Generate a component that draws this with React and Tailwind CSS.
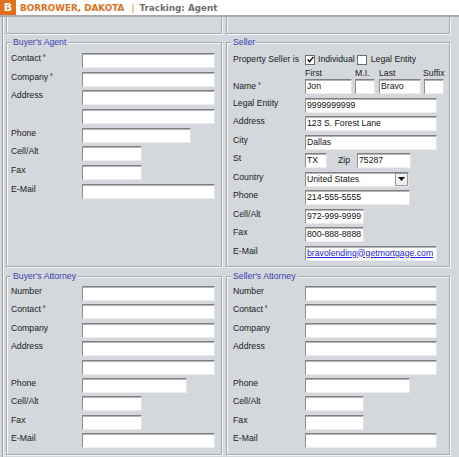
import React from "react";

const LBL = "text-[8.7px] leading-[11px] text-[#1b1b1b] whitespace-nowrap";

function Mark() {
  return <span className="ml-[2px] relative -top-[2px] text-[6px]">ª</span>;
}

function Field({ w, children, className = "" }) {
  return (
    <div
      className={`h-[15px] shrink-0 bg-white border border-t-[#808080] border-l-[#8e8e8e] border-r-[#e4e4e4] border-b-[#ececec] shadow-[inset_0_1px_0_#b4b4b4] pl-[1px] text-[8.7px] leading-[13px] text-[#111] whitespace-nowrap overflow-hidden ${w} ${className}`}
    >
      {children}
    </div>
  );
}

function Row({ label, mark, lw, w, children }) {
  return (
    <div className="flex h-[15px]">
      <div className={`${lw} shrink-0 ${LBL}`}>
        {label}
        {mark && <Mark />}
      </div>
      <Field w={w}>{children}</Field>
    </div>
  );
}

function Check({ on }) {
  return (
    <span className="w-[10px] h-[10px] shrink-0 bg-white border border-[#6e6e6e] flex items-center justify-center">
      {on && (
        <svg width="7" height="7" viewBox="0 0 7 7">
          <path d="M0.6 3.4L2.6 5.6L6.4 0.9" stroke="#111" strokeWidth="1.5" fill="none" />
        </svg>
      )}
    </span>
  );
}

function Group({ title, className, children }) {
  return (
    <fieldset
      className={`min-w-0 border border-[#a7abaf] shadow-[inset_1px_1px_0_#f5f7f9,1px_1px_0_#f5f7f9] ${className}`}
    >
      <legend className="ml-[4px] px-[2px] bg-[#d4d7db] text-[8.7px] leading-[11px] text-[#3b3fb4]">{title}</legend>
      {children}
    </fieldset>
  );
}

const TOPBOX =
  "h-[17px] border-x border-b border-[#a7abaf] shadow-[inset_1px_0_0_#f5f7f9,1px_1px_0_#f5f7f9]";

function BuyersAgent() {
  return (
    <Group title="Buyer's Agent" className="mt-[2.5px] h-[230.5px]">
      <div className="pl-[4px] pt-[5.5px] flex flex-col gap-[3.7px]">
        <Row label="Contact" mark lw="w-[71px]" w="w-[133px]" />
        <Row label="Company" mark lw="w-[71px]" w="w-[133px]" />
        <Row label="Address" lw="w-[71px]" w="w-[133px]" />
        <Row label="" lw="w-[71px]" w="w-[133px]" />
        <Row label="Phone" lw="w-[71px]" w="w-[109px]" />
        <Row label="Cell/Alt" lw="w-[71px]" w="w-[60px]" />
        <Row label="Fax" lw="w-[71px]" w="w-[60px]" />
        <Row label="E-Mail" lw="w-[71px]" w="w-[133px]" />
      </div>
    </Group>
  );
}

function Attorney({ title, lw, full, phone, cell, pl }) {
  return (
    <Group title={title} className="mt-[3.5px] h-[184.5px]">
      <div className={`${pl} pt-[4.5px] flex flex-col gap-[3.4px]`}>
        <Row label="Number" lw={lw} w={full} />
        <Row label="Contact" mark lw={lw} w={full} />
        <Row label="Company" lw={lw} w={full} />
        <Row label="Address" lw={lw} w={full} />
        <Row label="" lw={lw} w={full} />
        <Row label="Phone" lw={lw} w={phone} />
        <Row label="Cell/Alt" lw={lw} w={cell} />
        <Row label="Fax" lw={lw} w={cell} />
        <Row label="E-Mail" lw={lw} w={full} />
      </div>
    </Group>
  );
}

function Seller() {
  return (
    <Group title="Seller" className="mt-[2.5px] h-[230.5px]">
      <div className="pl-[6px] pt-[5.5px] flex flex-col">
        <div className={`flex h-[13px] items-center ${LBL}`}>
          <span className="w-[72px]">Property Seller is</span>
          <Check on />
          <span className="ml-[3px]">Individual</span>
          <span className="ml-[2px]">
            <Check />
          </span>
          <span className="ml-[4px]">Legal Entity</span>
        </div>
        <div className={`flex h-[13px] pl-[72px] pt-[2px] ${LBL} leading-[10px]`}>
          <span className="w-[50px]">First</span>
          <span className="w-[24px]">M.I.</span>
          <span className="w-[44px]">Last</span>
          <span>Suffix</span>
        </div>
        <div className="flex flex-col gap-[3.5px]">
          <div className="flex h-[15px] items-center">
            <div className={`w-[72px] ${LBL}`}>
              Name
              <Mark />
            </div>
            <Field w="w-[47px]">Jon</Field>
            <Field w="w-[20px]" className="ml-[3px]" />
            <Field w="w-[42px]" className="ml-[4px]">Bravo</Field>
            <Field w="w-[20px]" className="ml-[3px]" />
          </div>
          <Row label="Legal Entity" lw="w-[72px]" w="w-[132px]">9999999999</Row>
          <Row label="Address" lw="w-[72px]" w="w-[132px]">123 S. Forest Lane</Row>
          <Row label="City" lw="w-[72px]" w="w-[132px]">Dallas</Row>
          <div className="flex h-[15px]">
            <div className={`w-[72px] ${LBL}`}>St</div>
            <Field w="w-[22px]">TX</Field>
            <div className={`ml-[11px] w-[19px] ${LBL} pt-[2px]`}>Zip</div>
            <Field w="w-[54px]">75287</Field>
          </div>
          <div className="flex h-[15px]">
            <div className={`w-[72px] ${LBL}`}>Country</div>
            <Field w="w-[104px]" className="flex pr-[0px]">
              <span className="flex-1">United States</span>
              <div className="w-[13px] h-[13px] bg-[#f0f0f0] border border-[#9a9a9a] flex items-center justify-center">
                <svg width="7" height="4" viewBox="0 0 7 4">
                  <path d="M0 0H7L3.5 4Z" fill="#111" />
                </svg>
              </div>
            </Field>
          </div>
          <Row label="Phone" lw="w-[72px]" w="w-[105px]">214-555-5555</Row>
          <Row label="Cell/Alt" lw="w-[72px]" w="w-[59px]">972-999-9999</Row>
          <Row label="Fax" lw="w-[72px]" w="w-[59px]">800-888-8888</Row>
          <Row label="E-Mail" lw="w-[72px]" w="w-[132px]">
            <span className="text-[#2323d8] underline">bravolending@getmortgage.com</span>
          </Row>
        </div>
      </div>
    </Group>
  );
}

export default function App() {
  return (
    <div className="w-[459px] h-[457px] overflow-hidden bg-[#d4d7db] font-['Liberation_Sans',Arial,sans-serif]">
      <header className="h-[17px] bg-white border-b-2 border-[#aaaaaa] flex items-start">
        <div className="w-[16px] h-[15px] bg-[#e2701b] flex items-center justify-center">
          <span className="text-white font-bold text-[11px] leading-none font-['DejaVu_Sans',sans-serif]">B</span>
        </div>
        <div className="flex items-center h-[15px] pt-[2px] font-['DejaVu_Sans',sans-serif] font-bold text-[8.8px] leading-none whitespace-nowrap">
          <span className="ml-[4px] text-[#e2701b]">BORROWER, DAKOTA</span>
          <span className="ml-[7px] text-[#e2701b] font-normal">|</span>
          <span className="ml-[5px] text-[#6f6f6f]">Tracking: Agent</span>
        </div>
      </header>
      <div className="ml-[2px] h-[440px] border-l border-[#9a9ea2] shadow-[inset_1px_0_0_#f5f7f9] pl-[3px]">
        <div className="grid grid-cols-[216px_224px] gap-x-[4px]">
          <div className="flex flex-col">
            <div className={TOPBOX} />
            <BuyersAgent />
            <Attorney title="Buyer's Attorney" lw="w-[71px]" full="w-[133px]" phone="w-[105px]" cell="w-[60px]" pl="pl-[4px]" />
          </div>
          <div className="flex flex-col">
            <div className={TOPBOX} />
            <Seller />
            <Attorney title="Seller's Attorney" lw="w-[72px]" full="w-[132px]" phone="w-[105px]" cell="w-[59px]" pl="pl-[6px]" />
          </div>
        </div>
      </div>
    </div>
  );
}
